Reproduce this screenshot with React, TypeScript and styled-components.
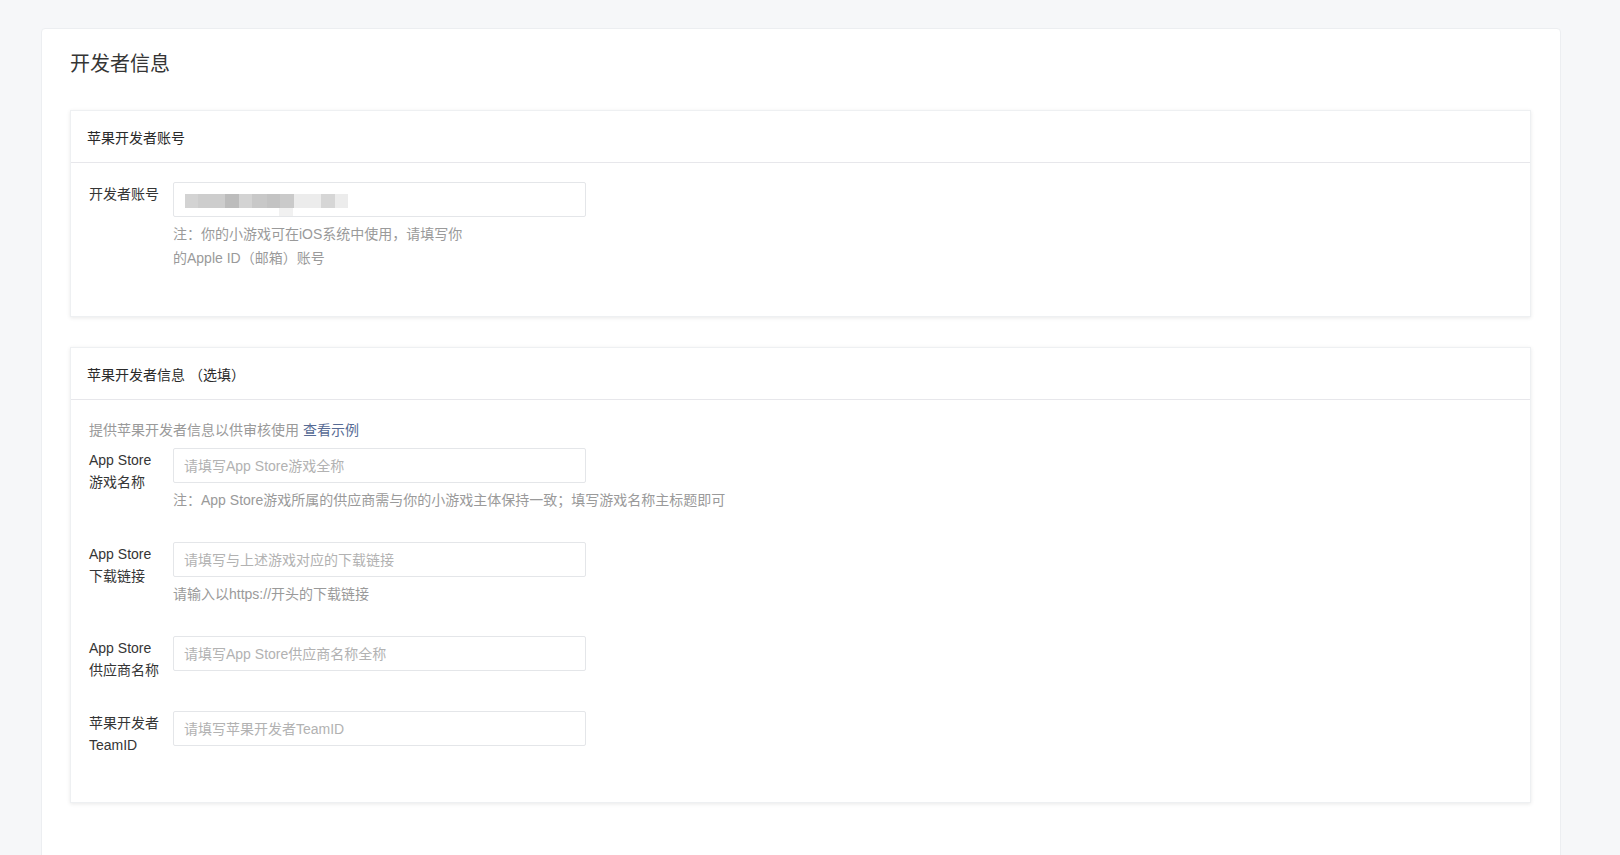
import React from "react";
import styled, { createGlobalStyle } from "styled-components";

const GlobalStyle = createGlobalStyle`
  html, body {
    margin: 0;
    padding: 0;
    background-color: #f6f7f9;
    font-family: "Liberation Sans", "Noto Sans CJK SC", sans-serif;
    color: #353535;
  }
`;

const Page = styled.div`
  height: 855px;
  overflow: hidden;
  padding: 28px 59px 0 41px;
  box-sizing: border-box;
`;

const Panel = styled.div`
  background-color: #fff;
  border: 1px solid #eceef1;
  border-radius: 4px;
  min-height: 900px;
  padding: 21px 29px 40px 28px;
  box-sizing: border-box;
`;

const PageTitle = styled.h2`
  margin: 0 0 32px 0;
  font-size: 20px;
  font-weight: 400;
  line-height: 28px;
  color: #353535;
`;

const Card = styled.section`
  background-color: #fff;
  border: 1px solid #eef0f2;
  box-shadow: 0 1px 4px rgba(0, 0, 0, 0.09);
  margin-bottom: 30px;
`;

const CardHeader = styled.div`
  height: 51px;
  display: flex;
  align-items: center;
  padding: 0 16px;
  border-bottom: 1px solid #e7e7eb;
  font-size: 14px;
  color: #2a2a2a;
`;

const CardBody = styled.div`
  padding: 19px 18px 16px;
`;

const Intro = styled.p`
  margin: 0 0 7px 0;
  font-size: 14px;
  line-height: 22px;
  color: #9a9a9a;
`;

const Link = styled.a`
  color: #576b95;
  text-decoration: none;
  cursor: pointer;
`;

const FormItem = styled.div`
  display: flex;
  align-items: flex-start;
  margin-bottom: 30px;
`;

const Label = styled.label`
  width: 72px;
  margin-right: 12px;
  padding-top: 1px;
  flex-shrink: 0;
  font-size: 14px;
  line-height: 22px;
  color: #353535;
`;

const Field = styled.div`
  display: flex;
  flex-direction: column;
`;

const Input = styled.input`
  width: 413px;
  height: 35px;
  box-sizing: border-box;
  border: 1px solid #e4e6e9;
  border-radius: 2px;
  padding: 0 10px;
  font-size: 14px;
  font-family: inherit;
  color: #353535;
  outline: none;
  &::placeholder {
    color: #b2b2b2;
  }
`;

const MaskedInput = styled.div`
  position: relative;
  width: 413px;
  height: 35px;
  box-sizing: border-box;
  border: 1px solid #e4e6e9;
  border-radius: 2px;
`;

const Mosaic = styled.div`
  position: absolute;
  left: 11px;
  top: 11px;
  display: flex;
`;

const Tile = styled.span<{ $shade: string; $w: number }>`
  display: block;
  width: ${(p) => p.$w}px;
  height: 14px;
  background-color: ${(p) => p.$shade};
`;

const TileBelow = styled.span`
  position: absolute;
  left: 105px;
  top: 25px;
  width: 14px;
  height: 8px;
  background-color: #f1f1f1;
`;

const Help = styled.div<{ $narrow?: boolean }>`
  margin-top: 5px;
  max-width: ${(p) => (p.$narrow ? "300px" : "none")};
  font-size: 14px;
  line-height: 24px;
  color: #9a9a9a;
`;

const tiles: [string, number][] = [
  ["#d3d3d3", 13],
  ["#cdcdcd", 27],
  ["#bcbcbc", 14],
  ["#d3d3d3", 13],
  ["#c8c8c8", 15],
  ["#c3c3c3", 13],
  ["#cacaca", 14],
  ["#ececec", 27],
  ["#d6d6d6", 14],
  ["#ececec", 13],
];

interface RowProps {
  label: React.ReactNode;
  placeholder: string;
  help?: string;
}

const Row = ({ label, placeholder, help }: RowProps) => (
  <FormItem>
    <Label>{label}</Label>
    <Field>
      <Input placeholder={placeholder} />
      {help && <Help>{help}</Help>}
    </Field>
  </FormItem>
);

export default function App() {
  return (
    <Page>
      <GlobalStyle />
      <Panel>
        <PageTitle>开发者信息</PageTitle>

        <Card>
          <CardHeader>苹果开发者账号</CardHeader>
          <CardBody>
            <FormItem>
              <Label>开发者账号</Label>
              <Field>
                <MaskedInput>
                  <Mosaic>
                    {tiles.map(([shade, w], i) => (
                      <Tile key={i} $shade={shade} $w={w} />
                    ))}
                  </Mosaic>
                  <TileBelow />
                </MaskedInput>
                <Help $narrow>注：你的小游戏可在iOS系统中使用，请填写你的Apple ID（邮箱）账号</Help>
              </Field>
            </FormItem>
          </CardBody>
        </Card>

        <Card>
          <CardHeader>苹果开发者信息 （选填）</CardHeader>
          <CardBody>
            <Intro>
              提供苹果开发者信息以供审核使用 <Link>查看示例</Link>
            </Intro>
            <Row
              label="App Store 游戏名称"
              placeholder="请填写App Store游戏全称"
              help="注：App Store游戏所属的供应商需与你的小游戏主体保持一致；填写游戏名称主标题即可"
            />
            <Row
              label="App Store 下载链接"
              placeholder="请填写与上述游戏对应的下载链接"
              help="请输入以https://开头的下载链接"
            />
            <Row label="App Store 供应商名称" placeholder="请填写App Store供应商名称全称" />
            <Row label="苹果开发者TeamID" placeholder="请填写苹果开发者TeamID" />
          </CardBody>
        </Card>
      </Panel>
    </Page>
  );
}
